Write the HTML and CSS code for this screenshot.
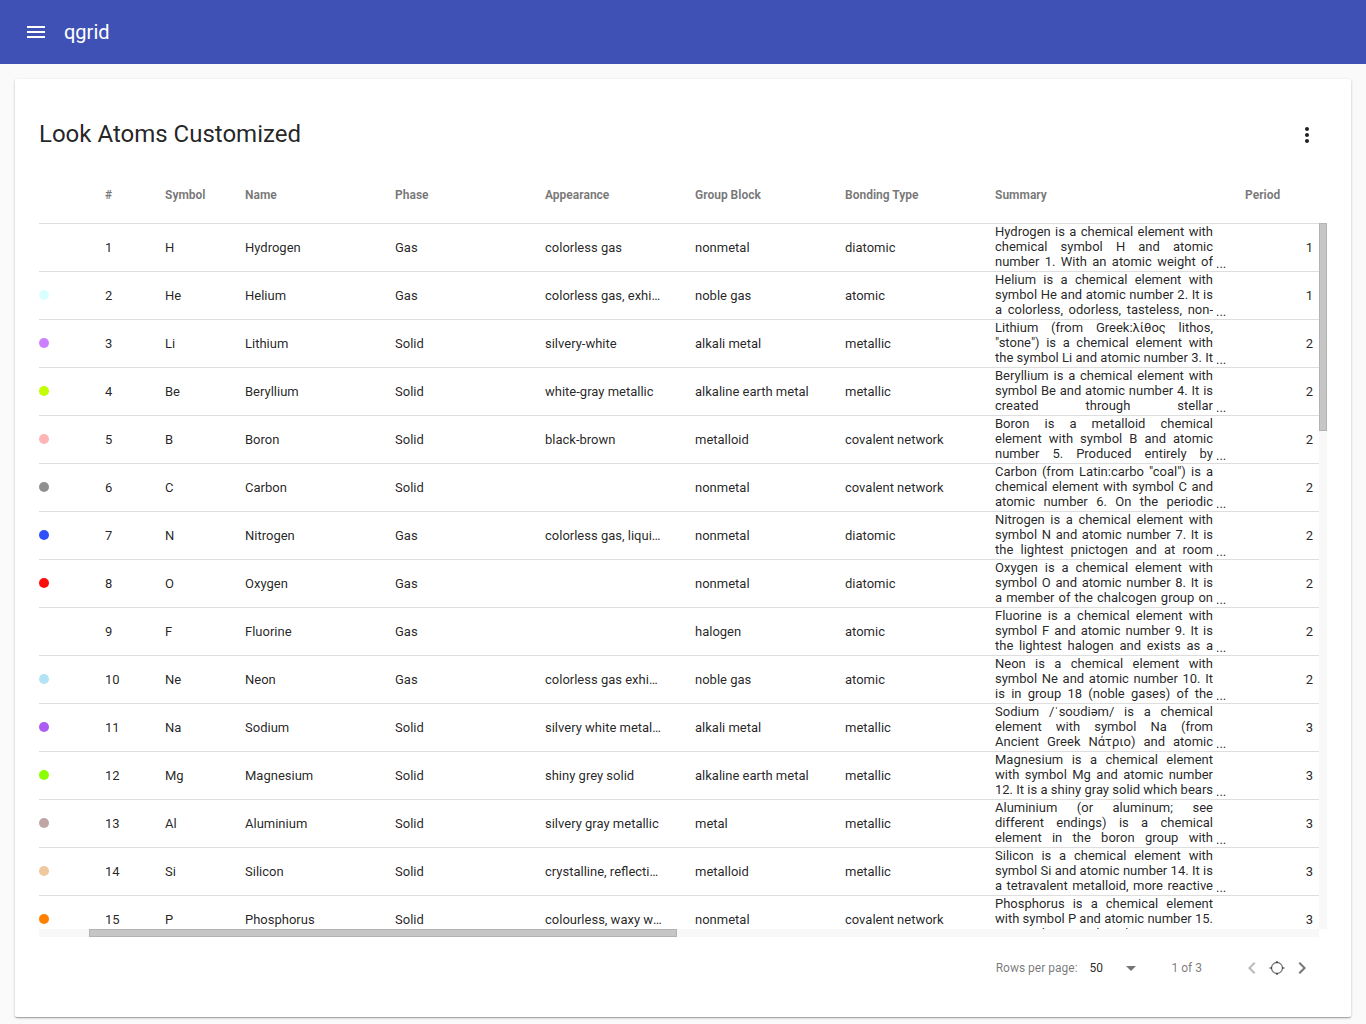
FILE: index.html
```html
<!DOCTYPE html>
<html lang="en">
<head>
<meta charset="utf-8">
<meta name="viewport" content="width=device-width, initial-scale=1">
<title>qgrid</title>
<link rel="stylesheet" href="styles.css">
</head>
<body>
<header class="toolbar">
  <button class="icon-button" type="button" aria-label="Menu">
    <svg width="24" height="24" viewBox="0 0 24 24" fill="currentColor"><path d="M3 18h18v-2H3v2zm0-5h18v-2H3v2zm0-7v2h18V6H3z"/></svg>
  </button>
  <a class="brand" href="#">qgrid</a>
</header>
<main class="card">
  <div class="card-head">
    <h1 class="title">Look Atoms Customized</h1>
    <button class="icon-button" type="button" aria-label="Grid options">
      <svg width="24" height="24" viewBox="0 0 24 24" fill="currentColor"><path d="M12 8c1.1 0 2-.9 2-2s-.9-2-2-2-2 .9-2 2 .9 2 2 2zm0 2c-1.1 0-2 .9-2 2s.9 2 2 2 2-.9 2-2-.9-2-2-2zm0 6c-1.1 0-2 .9-2 2s.9 2 2 2 2-.9 2-2-.9-2-2-2z"/></svg>
    </button>
  </div>
  <div class="grid">
    <div class="viewport">
      <table class="atoms">
        <colgroup>
          <col class="col-dot"><col class="col-number"><col class="col-symbol"><col class="col-text"><col class="col-text"><col class="col-text"><col class="col-text"><col class="col-text"><col class="col-summary"><col class="col-period">
        </colgroup>
        <thead>
          <tr><th></th><th>#</th><th>Symbol</th><th>Name</th><th>Phase</th><th>Appearance</th><th>Group Block</th><th>Bonding Type</th><th>Summary</th><th>Period</th></tr>
        </thead>
        <tbody>
          <tr><td><i class="dot" style="background:#ffffff"></i></td><td>1</td><td>H</td><td>Hydrogen</td><td>Gas</td><td class="cut">colorless gas</td><td>nonmetal</td><td>diatomic</td><td class="long"><div class="summary"><p>Hydrogen is a chemical element with chemical symbol H and atomic number 1. With an atomic weight of 1.00794 u, hydrogen is the lightest element.</p><span>...</span></div></td><td class="num">1</td></tr>
          <tr><td><i class="dot" style="background:#d9ffff"></i></td><td>2</td><td>He</td><td>Helium</td><td>Gas</td><td class="cut">colorless gas, exhibiting a red-orange glow</td><td>noble gas</td><td>atomic</td><td class="long"><div class="summary"><p>Helium is a chemical element with symbol He and atomic number 2. It is a colorless, odorless, tasteless, non-toxic, inert, monatomic gas.</p><span>...</span></div></td><td class="num">1</td></tr>
          <tr><td><i class="dot" style="background:#cc80ff"></i></td><td>3</td><td>Li</td><td>Lithium</td><td>Solid</td><td class="cut">silvery-white</td><td>alkali metal</td><td>metallic</td><td class="long"><div class="summary"><p>Lithium (from Greek:λίθος lithos, "stone") is a chemical element with the symbol Li and atomic number 3. It is a soft, silver-white metal.</p><span>...</span></div></td><td class="num">2</td></tr>
          <tr><td><i class="dot" style="background:#c2ff00"></i></td><td>4</td><td>Be</td><td>Beryllium</td><td>Solid</td><td class="cut">white-gray metallic</td><td>alkaline earth metal</td><td>metallic</td><td class="long"><div class="summary"><p>Beryllium is a chemical element with symbol Be and atomic number 4. It is created through stellar nucleosynthesis and is a relatively rare element.</p><span>...</span></div></td><td class="num">2</td></tr>
          <tr><td><i class="dot" style="background:#ffb5b5"></i></td><td>5</td><td>B</td><td>Boron</td><td>Solid</td><td class="cut">black-brown</td><td>metalloid</td><td>covalent network</td><td class="long"><div class="summary"><p>Boron is a metalloid chemical element with symbol B and atomic number 5. Produced entirely by cosmic ray spallation.</p><span>...</span></div></td><td class="num">2</td></tr>
          <tr><td><i class="dot" style="background:#909090"></i></td><td>6</td><td>C</td><td>Carbon</td><td>Solid</td><td class="cut"></td><td>nonmetal</td><td>covalent network</td><td class="long"><div class="summary"><p>Carbon (from Latin:carbo "coal") is a chemical element with symbol C and atomic number 6. On the periodic table, it is the first of six elements in column 14.</p><span>...</span></div></td><td class="num">2</td></tr>
          <tr><td><i class="dot" style="background:#3050f8"></i></td><td>7</td><td>N</td><td>Nitrogen</td><td>Gas</td><td class="cut">colorless gas, liquid or solid</td><td>nonmetal</td><td>diatomic</td><td class="long"><div class="summary"><p>Nitrogen is a chemical element with symbol N and atomic number 7. It is the lightest pnictogen and at room temperature, it is a transparent, odorless diatomic gas.</p><span>...</span></div></td><td class="num">2</td></tr>
          <tr><td><i class="dot" style="background:#ff0d0d"></i></td><td>8</td><td>O</td><td>Oxygen</td><td>Gas</td><td class="cut"></td><td>nonmetal</td><td>diatomic</td><td class="long"><div class="summary"><p>Oxygen is a chemical element with symbol O and atomic number 8. It is a member of the chalcogen group on the periodic table and is a highly reactive nonmetal.</p><span>...</span></div></td><td class="num">2</td></tr>
          <tr><td><i class="dot" style="background:#ffffff"></i></td><td>9</td><td>F</td><td>Fluorine</td><td>Gas</td><td class="cut"></td><td>halogen</td><td>atomic</td><td class="long"><div class="summary"><p>Fluorine is a chemical element with symbol F and atomic number 9. It is the lightest halogen and exists as a highly toxic pale yellow diatomic gas.</p><span>...</span></div></td><td class="num">2</td></tr>
          <tr><td><i class="dot" style="background:#b3e3f5"></i></td><td>10</td><td>Ne</td><td>Neon</td><td>Gas</td><td class="cut">colorless gas exhibiting an orange-red glow</td><td>noble gas</td><td>atomic</td><td class="long"><div class="summary"><p>Neon is a chemical element with symbol Ne and atomic number 10. It is in group 18 (noble gases) of the periodic table.</p><span>...</span></div></td><td class="num">2</td></tr>
          <tr><td><i class="dot" style="background:#ab5cf2"></i></td><td>11</td><td>Na</td><td>Sodium</td><td>Solid</td><td class="cut">silvery white metallic</td><td>alkali metal</td><td>metallic</td><td class="long"><div class="summary"><p>Sodium /ˈsoʊdiəm/ is a chemical element with symbol Na (from Ancient Greek Νάτριο) and atomic number 11. It is a soft, silver-white metal.</p><span>...</span></div></td><td class="num">3</td></tr>
          <tr><td><i class="dot" style="background:#8aff00"></i></td><td>12</td><td>Mg</td><td>Magnesium</td><td>Solid</td><td class="cut">shiny grey solid</td><td>alkaline earth metal</td><td>metallic</td><td class="long"><div class="summary"><p>Magnesium is a chemical element with symbol Mg and atomic number 12. It is a shiny gray solid which bears a close physical resemblance to the other alkaline earth metals.</p><span>...</span></div></td><td class="num">3</td></tr>
          <tr><td><i class="dot" style="background:#bfa6a6"></i></td><td>13</td><td>Al</td><td>Aluminium</td><td>Solid</td><td class="cut">silvery gray metallic</td><td>metal</td><td>metallic</td><td class="long"><div class="summary"><p>Aluminium (or aluminum; see different endings) is a chemical element in the boron group with symbol Al and atomic number 13.</p><span>...</span></div></td><td class="num">3</td></tr>
          <tr><td><i class="dot" style="background:#f0c8a0"></i></td><td>14</td><td>Si</td><td>Silicon</td><td>Solid</td><td class="cut">crystalline, reflective with bluish-tinged faces</td><td>metalloid</td><td>metallic</td><td class="long"><div class="summary"><p>Silicon is a chemical element with symbol Si and atomic number 14. It is a tetravalent metalloid, more reactive than germanium, the metalloid directly below it.</p><span>...</span></div></td><td class="num">3</td></tr>
          <tr><td><i class="dot" style="background:#ff8000"></i></td><td>15</td><td>P</td><td>Phosphorus</td><td>Solid</td><td class="cut">colourless, waxy white</td><td>nonmetal</td><td>covalent network</td><td class="long"><div class="summary"><p>Phosphorus is a chemical element with symbol P and atomic number 15. As an element, phosphorus exists in two major forms.</p><span>...</span></div></td><td class="num">3</td></tr>
        </tbody>
      </table>
    </div>
    <div class="track track-y"><div class="thumb"></div></div>
    <div class="track track-x"><div class="thumb"></div></div>
  </div>
  <footer class="pager">
    <label for="page-size">Rows per page:</label>
    <div class="size">
      <select id="page-size"><option>10</option><option selected>50</option><option>100</option></select>
    </div>
    <span class="range">1 of 3</span>
    <nav class="page-nav" aria-label="Pages">
      <button class="icon-button" type="button" aria-label="Previous page" disabled>
        <svg width="24" height="24" viewBox="0 0 24 24" fill="currentColor"><path d="M15.41 7.41L14 6l-6 6 6 6 1.41-1.41L10.83 12z"/></svg>
      </button>
      <button class="icon-button" type="button" aria-label="Current page">
        <svg width="16" height="16" viewBox="0 0 16 16" fill="none" stroke="currentColor"><circle cx="8" cy="8" r="5.5" stroke-width="1.3"/><path stroke-width="1.6" d="M8 1v2M8 13v2M.5 8h2.500M13 8h2.500"/></svg>
      </button>
      <button class="icon-button" type="button" aria-label="Next page">
        <svg width="24" height="24" viewBox="0 0 24 24" fill="currentColor"><path d="M10 6L8.590 7.410 13.170 12l-4.580 4.590L10 18l6-6z"/></svg>
      </button>
    </nav>
  </footer>
</main>
</body>
</html>
```
FILE: styles.css
```css
* {
  box-sizing: border-box;
}

body {
  display: flex;
  flex-direction: column;
  height: 100vh;
  margin: 0;
  background: #fafafa;
  color: rgba(0, 0, 0, 0.87);
  font-family: Roboto, "Liberation Sans", sans-serif;
  font-size: 13px;
}

.icon-button {
  display: flex;
  align-items: center;
  justify-content: center;
  width: 24px;
  height: 24px;
  padding: 0;
  border: 0;
  background: none;
  color: inherit;
}

.toolbar {
  display: flex;
  flex: none;
  align-items: center;
  gap: 16px;
  height: 64px;
  padding: 0 24px;
  background: #3f51b5;
  color: #fff;
}

.brand {
  color: inherit;
  font-size: 20px;
  line-height: 24px;
  text-decoration: none;
}

.card {
  display: flex;
  flex: 1;
  flex-direction: column;
  min-height: 0;
  margin: 15px 15px 7px;
  padding: 24px;
  border-radius: 2px;
  background: #fff;
  box-shadow: 0 1px 3px rgba(0, 0, 0, 0.2), 0 1px 1px rgba(0, 0, 0, 0.14), 0 2px 1px -1px rgba(0, 0, 0, 0.12);
}

.card-head {
  display: flex;
  flex: none;
  align-items: center;
  justify-content: space-between;
  height: 64px;
  padding-right: 8px;
}

.title {
  margin: 0;
  padding-bottom: 2px;
  font-size: 24px;
  font-weight: 400;
  line-height: 32px;
}

.grid {
  display: grid;
  flex: 1;
  grid-template-rows: minmax(0, 1fr) 8px;
  grid-template-columns: minmax(0, 1fr) 8px;
  min-height: 0;
}

.viewport {
  overflow: hidden;
}

.atoms {
  width: 100%;
  border-collapse: separate;
  border-spacing: 0;
  table-layout: fixed;
}

.col-dot {
  width: 66px;
}

.col-number {
  width: 60px;
}

.col-symbol {
  width: 80px;
}

.col-text {
  width: 150px;
}

.col-period {
  width: 74px;
}

.atoms th,
.atoms td {
  height: 48px;
  padding: 0;
  border-bottom: 1px solid #dedede;
  text-align: left;
  white-space: nowrap;
}

.atoms th {
  height: 57px;
  color: rgba(0, 0, 0, 0.54);
  font-size: 12px;
  font-weight: 700;
}

.atoms .cut {
  overflow: hidden;
  padding-right: 32px;
  text-overflow: ellipsis;
}

.atoms .long {
  vertical-align: top;
}

.atoms .num {
  padding-right: 6px;
  text-align: right;
}

.dot {
  display: block;
  width: 10px;
  height: 10px;
  margin-bottom: 2px;
  border-radius: 50%;
}

.summary {
  display: flex;
  align-items: flex-end;
  gap: 3px;
  line-height: 15px;
}

.summary p {
  overflow: hidden;
  width: 218px;
  height: 45px;
  margin: 0;
  text-align: justify;
  white-space: normal;
}

.summary span {
  line-height: 11px;
}

.track {
  background: #f8f8f8;
}

.track-y {
  margin-top: 56px;
}

.track-y .thumb {
  height: 208px;
}

.track-x {
  padding-left: 50px;
}

.track-x .thumb {
  width: 588px;
  max-width: 100%;
  height: 8px;
}

.thumb {
  border: 1px solid #b3b3b3;
  background: #c6c6c6;
}

.pager {
  display: flex;
  flex: none;
  align-items: center;
  justify-content: flex-end;
  height: 56px;
  padding: 6px 13px 0 0;
  color: rgba(0, 0, 0, 0.54);
  font-size: 12px;
}

.size {
  display: grid;
  align-items: center;
  width: 46px;
  margin: 0 36px 0 12px;
}

.size select {
  grid-area: 1 / 1;
  width: 100%;
  padding: 0;
  border: 0;
  appearance: none;
  background: none;
  color: rgba(0, 0, 0, 0.87);
  font: inherit;
}

.size::after {
  grid-area: 1 / 1;
  justify-self: end;
  border: 5px solid transparent;
  border-top-color: currentColor;
  border-bottom: 0;
  content: "";
  pointer-events: none;
}

.page-nav {
  display: flex;
  gap: 1px;
  margin-left: 38px;
}

.page-nav .icon-button:disabled {
  opacity: 0.5;
}
```
